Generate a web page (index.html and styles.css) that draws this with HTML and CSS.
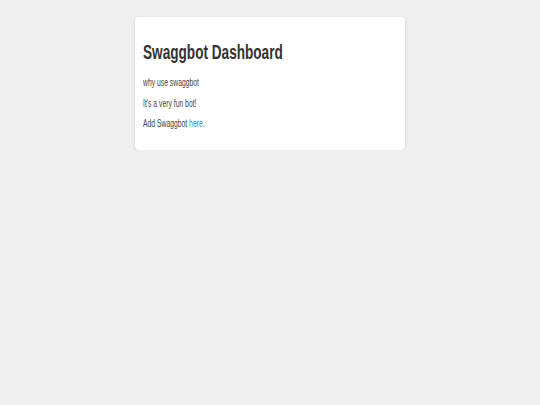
FILE: index.html
```html
<!DOCTYPE html>
<html lang="en">
<head>
    <meta charset="UTF-8">
    <meta name="viewport" content="width=device-width, initial-scale=1.0">
    <title>Swaggbot Dashboard</title>
    <link rel="stylesheet" href="styles.css">
</head>
<body>

    <div class="card">
        <h1>Swaggbot Dashboard</h1>
        <p>why use swaggbot</p>
        <p>It's a very fun bot!</p>
        <p>Add Swaggbot <a href="#">here</a>.</p>
    </div>

</body>
</html>
```

FILE: styles.css
```css
body {
    background-color: #efefef;
    color: #333333;
    font-family: "Liberation Sans", Arial, sans-serif;
    margin: 0;
    padding-top: 17px;
}
.card {
    width: 254px;
    margin: 0 auto;
    padding: 8px 8px 11px 8px;
    background-color: #ffffff;
    border-radius: 4px;
    box-shadow: 0 1px 3px rgba(0, 0, 0, 0.15);
}
h1, p {
    transform: scaleX(0.68);
    transform-origin: left center;
}
h1 {
    font-size: 20px;
    margin: 16px 0 13px 0;
}
p {
    font-size: 10px;
    line-height: 12px;
    margin: 8.5px 0;
    color: #444444;
}
a {
    color: #1e88e5;
    text-decoration: none;
}
```
